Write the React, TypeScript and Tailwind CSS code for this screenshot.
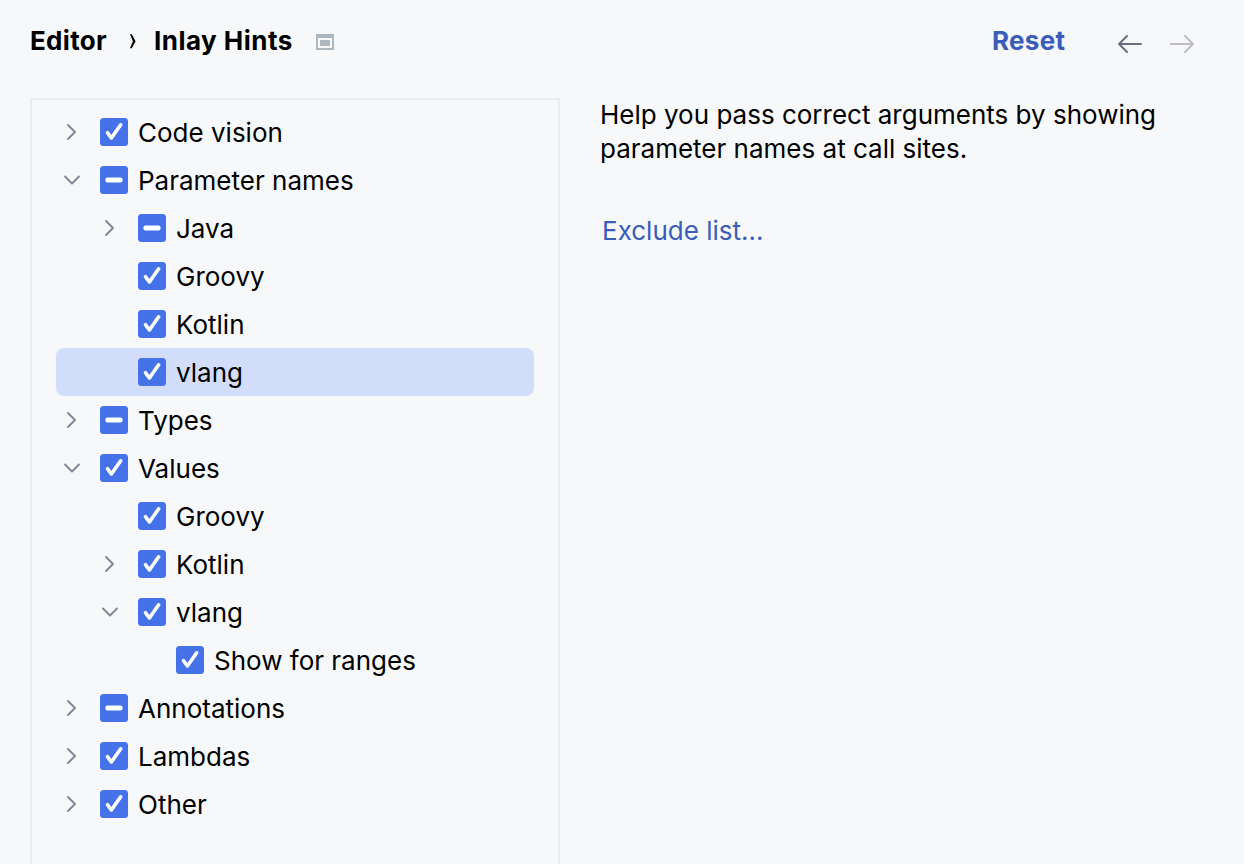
type State = 'checked' | 'mixed';
type Arrow = 'right' | 'down' | null;
type Row = { label: string; depth: number; state: State; arrow: Arrow; selected?: boolean };

const rows: Row[] = [
  { label: 'Code vision', depth: 0, state: 'checked', arrow: 'right' },
  { label: 'Parameter names', depth: 0, state: 'mixed', arrow: 'down' },
  { label: 'Java', depth: 1, state: 'mixed', arrow: 'right' },
  { label: 'Groovy', depth: 1, state: 'checked', arrow: null },
  { label: 'Kotlin', depth: 1, state: 'checked', arrow: null },
  { label: 'vlang', depth: 1, state: 'checked', arrow: null, selected: true },
  { label: 'Types', depth: 0, state: 'mixed', arrow: 'right' },
  { label: 'Values', depth: 0, state: 'checked', arrow: 'down' },
  { label: 'Groovy', depth: 1, state: 'checked', arrow: null },
  { label: 'Kotlin', depth: 1, state: 'checked', arrow: 'right' },
  { label: 'vlang', depth: 1, state: 'checked', arrow: 'down' },
  { label: 'Show for ranges', depth: 2, state: 'checked', arrow: null },
  { label: 'Annotations', depth: 0, state: 'mixed', arrow: 'right' },
  { label: 'Lambdas', depth: 0, state: 'checked', arrow: 'right' },
  { label: 'Other', depth: 0, state: 'checked', arrow: 'right' },
];

const indents = ['pl-0', 'pl-[38px]', 'pl-[76px]'];

function Chevron({ arrow }: { arrow: Arrow }) {
  return (
    <svg className="h-8 w-8 shrink-0" viewBox="0 0 32 32" fill="none" stroke="#858595" strokeWidth="1.9" strokeLinecap="round" strokeLinejoin="round">
      {arrow === 'right' && <path d="M12 9l7 7-7 7" />}
      {arrow === 'down' && <path d="M9 12.5l7 7 7-7" />}
    </svg>
  );
}

function Checkbox({ state }: { state: State }) {
  return (
    <svg className="ml-3 h-7 w-7 shrink-0" viewBox="0 0 28 28" fill="none">
      <rect width="28" height="28" rx="3.5" fill="#4572E8" />
      {state === 'checked' ? (
        <path d="M7.5 14.7l3.9 5.3L20.7 6.8" stroke="#fff" strokeWidth="3.6" strokeLinecap="round" strokeLinejoin="round" />
      ) : (
        <rect x="5.5" y="11.5" width="17" height="5" rx="1.8" fill="#fff" />
      )}
    </svg>
  );
}

export default function App() {
  return (
    <div className="flex h-[864px] w-full flex-col overflow-hidden bg-[#f7f8fa] font-['Inter',sans-serif] text-[26px] text-black">
      <header className="flex h-[98px] shrink-0 items-start pt-6 pr-[50px] pl-[30px] leading-[34px] font-bold">
        <span className="w-[98px] tracking-[0.3px]">Editor</span>
        <svg className="mt-[9px] h-4 w-[26px]" viewBox="0 0 26 16">
          <path d="M2 1.3h1.8L7.6 8.3 3.8 15.3H2L4.9 8.3z" fill="#000" />
        </svg>
        <span className="w-[162px] tracking-[0.48px] whitespace-nowrap">Inlay Hints</span>
        <svg className="mt-2.5 h-4 w-[18px]" viewBox="0 0 18 16">
          <path fillRule="evenodd" d="M0 0h18v16H0zM2 4v10h14V4z" fill="#adb7bf" />
          <path d="M4 6h10v6H4z" fill="#adb7bf" />
        </svg>
        <span className="ml-auto w-[126px] tracking-[0.3px] text-[#3a5dba]">Reset</span>
        <svg className="mt-2.5 h-5 w-6" viewBox="0 0 24 20" fill="none" stroke="#6c6d7e" strokeWidth="2" strokeLinecap="round" strokeLinejoin="round">
          <path d="M23 10H1M9 2L1 10l8 8" />
        </svg>
        <svg className="mt-2.5 ml-7 h-5 w-6" viewBox="0 0 24 20" fill="none" stroke="#bebec0" strokeWidth="2" strokeLinecap="round" strokeLinejoin="round">
          <path d="M1 10h22M15 2l8 8-8 8" />
        </svg>
      </header>
      <main className="flex min-h-0 flex-1">
        <div className="ml-[30px] w-[530px] shrink-0 border-2 border-b-0 border-[#ebecee] px-6 pt-2">
          {rows.map((row, i) => (
            <div key={i} className={row.selected ? 'h-12 rounded-lg bg-[#d2ddf9]' : 'h-12'}>
              <div className={`flex h-full items-center ${indents[row.depth]}`}>
                <Chevron arrow={row.arrow} />
                <Checkbox state={row.state} />
                <span className="ml-2.5 pt-0.5 leading-[38px] whitespace-nowrap">{row.label}</span>
              </div>
            </div>
          ))}
        </div>
        <section className="ml-10 leading-[34px]">
          <p className="whitespace-nowrap">Help you pass correct arguments by showing<br />parameter names at call sites.</p>
          <a className="mt-12 ml-0.5 block text-[#3a5dba]">Exclude list...</a>
        </section>
      </main>
    </div>
  );
}
